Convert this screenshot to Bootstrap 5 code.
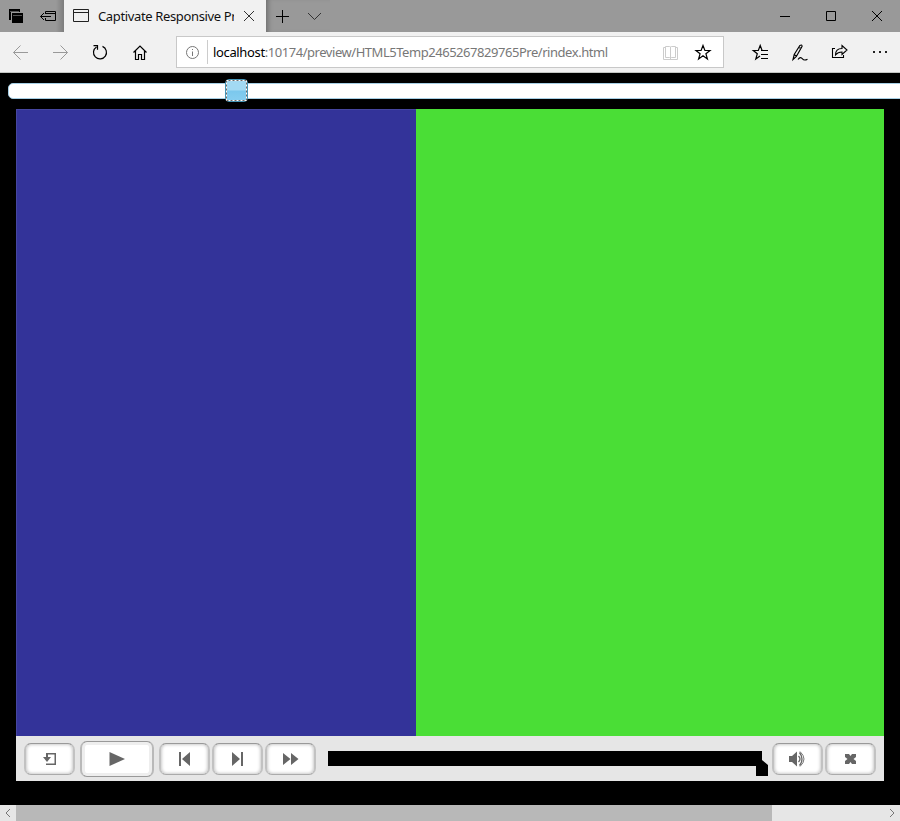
<!DOCTYPE html>
<html lang="en">
<head>
<meta charset="utf-8">
<meta name="viewport" content="width=device-width, initial-scale=1">
<title>Captivate Responsive Project</title>
<link href="https://cdn.jsdelivr.net/npm/bootstrap@5.3.0/dist/css/bootstrap.min.css" rel="stylesheet">
<style>
body{width:900px;height:821px;background:#000;font-family:"Noto Sans","Open Sans",sans-serif;font-size:13px;line-height:20px}
svg{display:block;flex:none;fill:none;stroke:#000;stroke-width:1}
.titlebar{height:32px;background:#999}
.tab-shade{background:linear-gradient(90deg,transparent 56px,#7d7d7d 64px)}
.page-tab{width:202px;background:#f1f1f1}
.tab-title{width:136px;height:20px;letter-spacing:-.36px;color:#111}
.after-tab{height:32px;box-shadow:inset 5px 0 5px -3px #6d6d6d}
.toolbar{height:41px;background:#f1f1f1;border-bottom:1px solid #c3c6c3}
.address{width:548px;height:32px;border:1px solid #c8c8c8;background:#fff}
.divider{width:1px;height:24px;background:#ccc}
.url{width:448px;padding-left:5px;color:#777;letter-spacing:-.46px}
.url span{color:#000;letter-spacing:-.35px}
.slider-area{height:36px;padding:10px 0 0 8px}
.track{width:900px;height:16px;border:1px solid #a6cfe5;border-radius:5px;background:#fff;padding-left:216px}
.handle{width:23px;height:23px;margin-top:-5px;border:1px solid #4596b8;border-radius:4px;background:linear-gradient(#a3daf3 0 48%,#7bc8ed 52%,#87cef0)}
.stage{width:868px;height:627px;margin-left:16px}
.pane-blue{width:400px;background:#333399;border-top:1px solid #46469f;border-left:1px solid #46469f}
.pane-green{background:#4ade36}
.playbar{width:868px;height:45px;margin-left:16px;padding-left:8px;background:#e6e6e6}
.pbtn{width:51px;height:32px;margin-top:1px;border:solid #c2c2c2;border-width:1px 2px;border-top-color:#999;border-bottom-color:#aaa;border-radius:7px;background:#fff;box-shadow:inset 0 0 3px 1px #ccc;padding:0}
.pbtn-lg{width:74px;height:36px;border-color:#999 #b9b9b9;box-shadow:inset 0 0 0 3px #eee}
.pbtn svg{fill:#666;stroke:none}
.scrollbar{height:16px;margin-top:24px;background:#e6e6e6}
.scroll-thumb{width:756px;height:16px;background:#b8b8b8}
</style>
<script src="https://cdn.jsdelivr.net/npm/bootstrap@5.3.0/dist/js/bootstrap.bundle.min.js"></script>
</head>
<body class="overflow-hidden m-0">
<header>
 <div class="titlebar d-flex">
  <div class="tab-shade d-flex">
   <svg width="32" height="32" viewBox="0 0 32 32"><path d="M9 9h11v3H11v8H9z" fill="#000" stroke="none"/><path d="M12 13h11v10H12z" fill="#000" stroke="none"/><path d="M10 11.500h9M13 15.500h9" stroke="#777" stroke-width=".7"/></svg>
   <svg width="32" height="32" viewBox="32 0 32 32"><path d="M45.500 14v-2.500h10v9h-10V18M46 13.500h9M40.500 16.500H51M44 13l-3.500 3.500L44 20"/></svg>
  </div>
  <div class="page-tab d-flex align-items-center">
   <svg width="34" height="32" viewBox="64 0 34 32"><path d="M73.500 9.500h15v12h-15zM73.500 12.500h15" stroke="#222"/></svg>
   <div class="tab-title overflow-hidden text-nowrap">Captivate Responsive Project</div>
   <svg width="32" height="32" viewBox="234 0 32 32"><path d="M244 11l10 10M254 11l-10 10" stroke="#333"/></svg>
  </div>
  <div class="after-tab d-flex">
   <svg width="32" height="32" viewBox="266 0 32 32"><path d="M276 16.500h13M282.500 10v13"/></svg>
   <svg width="32" height="32" viewBox="298 0 32 32"><path d="M308 13l6.500 6.500L321 13" stroke="#333"/></svg>
  </div>
  <div class="d-flex ms-auto">
   <svg width="46" height="32" viewBox="762 0 46 32"><path d="M780 16.500h10"/></svg>
   <svg width="46" height="32" viewBox="808 0 46 32"><path d="M826.500 11.500h9v9h-9z"/></svg>
   <svg width="46" height="32" viewBox="854 0 46 32"><path d="M872 11l10 10M882 11l-10 10"/></svg>
  </div>
 </div>
 <div class="toolbar d-flex align-items-center">
  <svg width="40" height="40" viewBox="0 32 40 40"><path d="M28 52.500H13.500M20.500 45.500l-7 7 7 7" stroke="#999"/></svg>
  <svg width="40" height="40" viewBox="40 32 40 40"><path d="M53 52.500h14.500M60.500 45.500l7 7-7 7" stroke="#999"/></svg>
  <svg width="40" height="40" viewBox="80 32 40 40"><path d="M102.500 46.400a6.500 6.500 0 1 1-6 .5M93.500 45.700h4v4" stroke-width="1.200"/></svg>
  <svg width="56" height="40" viewBox="120 32 56 40"><path d="M133.500 52.500l6.500-6.500 6.500 6.500M135.500 51v8.500h3v-5h3v5h3V51" stroke-width="1.200"/></svg>
  <div class="address d-flex align-items-center">
   <svg width="30" height="30" viewBox="177 37 30 30"><circle cx="192.500" cy="52.500" r="6" stroke="#777"/><path d="M192.500 51.500v4.500M192.500 49v1" stroke="#777"/></svg>
   <div class="divider"></div>
   <div class="url text-nowrap"><span>localhost</span>:10174/preview/HTML5Temp2465267829765Pre/rindex.html</div>
   <svg width="30" height="30" viewBox="656 37 30 30"><path d="M665.500 46.500h4q1 0 1 1 0-1 1-1h4v11h-4q-1 0-1 1 0-1-1-1h-4zM670.500 47v12M665 47.500h-1.500v12h14v-12H676" stroke="#ccc"/></svg>
   <svg width="37" height="30" viewBox="686 37 37 30"><path d="M703 45.500l1.900 5h5.100l-4.100 3.200 1.500 5.200-4.400-3.200-4.400 3.200 1.500-5.200-4.100-3.200h5.100z" stroke-width="1.200"/></svg>
  </div>
  <div class="d-flex ms-auto">
   <svg width="40" height="40" viewBox="740 32 40 40"><path d="M768 50.500h-5.900l-1.900-5-1.900 5h-5l4 3.200-1.500 5.200 4.200-3M761 54.500h7M761 58.500h7M761 50.500h7" stroke-width="1.200"/></svg>
   <svg width="40" height="40" viewBox="780 32 40 40"><path d="M793 59.500l1.200-5 5.700-9q2-1.400 2.200.8l-5.700 10zM794.200 54.500l2.200 1.700M798.500 47.500l2.800 1M798 59.500c2-3 3.500-1.800 4.500-.6s2.500 1.600 5 .3" stroke-width="1.100"/></svg>
   <svg width="40" height="40" viewBox="820 32 40 40"><path d="M835 48.500h-2.500v9h11V55M835.500 55c0-4 2.500-6.500 6.500-6.500v-3l5 4.500-5 4.500V52c-3 0-4.800.8-6.500 3z" stroke-width="1.100"/></svg>
   <svg width="40" height="40" viewBox="860 32 40 40"><path d="M873 51h2v2h-2zM879 51h2v2h-2zM885 51h2v2h-2z" fill="#222" stroke="none"/></svg>
  </div>
 </div>
</header>
<main>
 <div class="slider-area overflow-hidden"><div class="track"><div class="handle"><svg width="21" height="21" viewBox="0 0 21 21"><rect x=".5" y=".5" width="20" height="20" stroke="#706864"/><rect x=".5" y=".5" width="20" height="20" stroke="#fff" stroke-dasharray="2 2"/></svg></div></div></div>
 <div class="stage d-flex"><div class="pane-blue"></div><div class="pane-green flex-grow-1"></div></div>
 <div class="playbar d-flex align-items-center">
  <button class="pbtn" aria-label="Exit"><svg width="47" height="30" viewBox="26 744 47 30"><path d="M46 753h10v12H46v-1.500h8.500v-9H48V757h3l-4 5-4-5h3z"/></svg></button>
  <button class="pbtn pbtn-lg" style="margin-left:5px" aria-label="Play"><svg width="70" height="34" viewBox="82 742 70 34"><path d="M109.500 752l15.500 7-15.500 7z"/></svg></button>
  <button class="pbtn" style="margin-left:5px" aria-label="Back"><svg width="47" height="30" viewBox="161 744 47 30"><path d="M179 752h2v14h-2zM190 752v14l-8-7z"/></svg></button>
  <button class="pbtn" style="margin-left:2px" aria-label="Next"><svg width="47" height="30" viewBox="214 744 47 30"><path d="M241 752h2v14h-2zM232 752v14l8-7z"/></svg></button>
  <button class="pbtn" style="margin-left:2px" aria-label="Fast forward"><svg width="47" height="30" viewBox="267 744 47 30"><path d="M283 753v12l7.500-6zM291 753v12l7.500-6z"/></svg></button>
  <svg width="456" height="45" viewBox="316 736 456 45"><path d="M328 751h434v9l6 5v11h-12v-10H328z" fill="#000" stroke="none"/></svg>
  <button class="pbtn" aria-label="Sound"><svg width="47" height="30" viewBox="774 744 47 30"><path d="M789 756h3l5-4.500v15l-5-4.500h-3z"/><path d="M798.500 756q3 3 0 6M799.500 752.500q5 6.500 0 13" fill="none" stroke="#666" stroke-width="1.300"/><path d="M800 751.500q8 7.500 0 15" fill="none" stroke="#777"/></svg></button>
  <button class="pbtn" style="margin-left:2px" aria-label="Close"><svg width="47" height="30" viewBox="827 744 47 30"><path d="M845 754h4l1.500 2 1.500-2h4v3l-2.500 2 2.500 2v3h-4l-1.500-2-1.500 2h-4v-3l2.500-2-2.500-2z"/></svg></button>
 </div>
 <div class="scrollbar d-flex">
  <svg width="16" height="16" viewBox="0 805 16 16"><path d="M10 809l-4 4 4 4" stroke="#777"/></svg>
  <div class="scroll-thumb"></div>
  <svg class="ms-auto" width="16" height="16" viewBox="884 805 16 16"><path d="M890 809l4 4-4 4" stroke="#777"/></svg>
 </div>
</main>
</body>
</html>
